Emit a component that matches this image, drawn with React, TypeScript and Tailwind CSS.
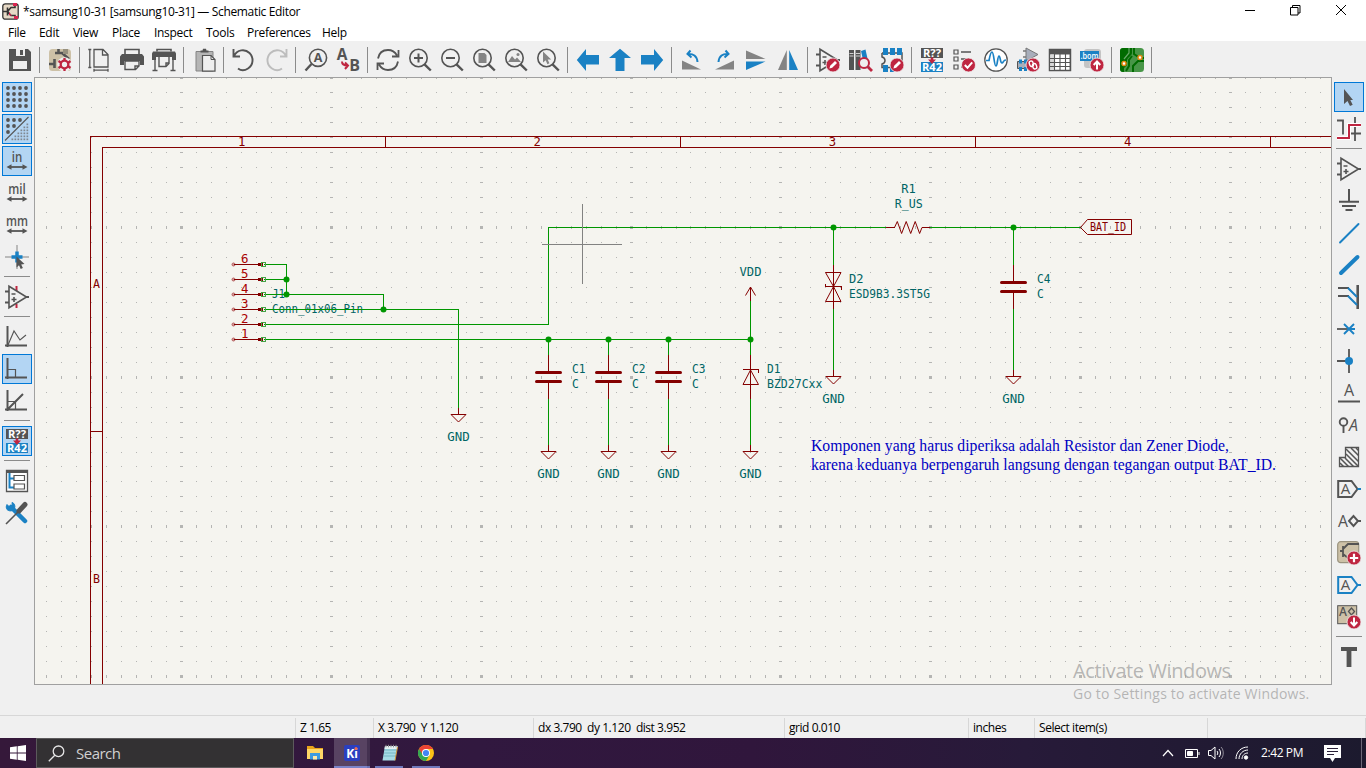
import React from "react";

const G = "#545454";
const B = "#1a81c4";
const R = "#bf2641";
const MAROON = "#840000";
const GREEN = "#009600";
const TEAL = "#006464";

type Kids = { children?: React.ReactNode };

function Ico({ children }: Kids) {
  return (
    <svg width="24" height="24" viewBox="0 0 24 24" fill="none" stroke={G} strokeWidth="1.6" className="block shrink-0 overflow-visible">
      {children}
    </svg>
  );
}

function IconText({ x, y, size, fill = G, weight = 700, italic = false, len, children }: { x: number; y: number; size: number; fill?: string; weight?: number; italic?: boolean; len?: number; children: string }) {
  return (
    <text x={x} y={y} fontSize={size} fill={fill} stroke="none" textAnchor="middle" fontWeight={weight} fontStyle={italic ? "italic" : "normal"} textLength={len} lengthAdjust="spacingAndGlyphs" fontFamily="'Open Sans','Noto Sans',sans-serif">
      {children}
    </text>
  );
}

function Badge({ x, y, r = 7, children }: { x: number; y: number; r?: number } & Kids) {
  return (
    <g transform={`translate(${x} ${y})`}>
      <circle r={r} fill={R} stroke="#efefef" strokeWidth="0.8" />
      {children}
    </g>
  );
}

const Pencil = () => <path d="M-3.6 3.6l.8-2.8L2-4l2 2L-.8 2.8z" fill="#fff" stroke="none" />;

const OpAmp = () => (
  <g>
    <path d="M4 1.2v21.6L21.5 12z" />
    <path d="M0 6.5h4M0 17.5h4M21 12h3" strokeWidth="2" />
    <path d="M6.5 9h4M6.5 14.5h5M9 12v5" />
  </g>
);

const Annotate = () => (
  <g stroke="none">
    <rect x="1" y="0" width="22" height="10" fill={G} />
    <rect x="1" y="14" width="22" height="10" fill={B} />
    <IconText x={12} y={8.8} size={10.5} fill="#fff" len={18}>R??</IconText>
    <IconText x={12} y={22.8} size={10.5} fill="#fff" len={20}>R42</IconText>
    <path d="M10.7 9.500h2.600v2h2.700L12 16 8 11.500h2.700z" fill={R} />
  </g>
);

function Mag({ children }: Kids) {
  return (
    <g>
      <circle cx="10.500" cy="10" r="8.700" />
      <path d="M16.500 16.300l6.300 6.200" strokeWidth="2.400" />
      {children}
    </g>
  );
}

const TOP: React.ReactNode[][] = [
  [
    <Ico><path d="M1 1h19l3 3v19H1z" fill={G} stroke="none" /><path d="M8 1h9v7H8zM5 13h14v8H5z" fill="#efefef" stroke="none" /><path d="M12 2h3v5h-3z" fill={G} stroke="none" /></Ico>,
  ],
  [
    <Ico>
      <rect x="1" y="1" width="22" height="22" rx="3.500" fill="#cdc1a7" stroke="none" />
      <path d="M10.500 1v4M15 5H7M1 16h5M6.500 11v9M14 5l7 6" strokeWidth="2.600" /><path d="M15 1h5v5h-5z" fill="#97917f" stroke="none" />
      <circle cx="16.500" cy="16.500" r="7.300" fill="#efefef" stroke="none" />
      <circle cx="16.500" cy="16.500" r="3.800" stroke={R} strokeWidth="2.300" />
      <path d="M16.500 10v3M16.500 20v3M10.500 13l3 2M20 18l2.500 2M10.500 20l3-2M20 15l2.500-2" stroke={R} strokeWidth="2.300" />
    </Ico>,
  ],
  [
    <Ico><path d="M6 1.500h9l5 5V19H6zM14.500 1.500v5.500H20M1.800 1v19M.3 1.500h3M.3 19.500h3M6 22.200h14M6 20.800v3M20 20.800v3" strokeWidth="1.300" /></Ico>,
    <Ico><path d="M5 6V1.500h14V6" /><path d="M0 8.500L2 6h20l2 2.500V17h-4v-4H4v4H0z" fill={G} stroke="none" /><path d="M5 13v8.500h10.500l3.500-3.500v-5zM15 21.500V18h4" strokeWidth="1.400" /></Ico>,
    <Ico><path d="M5 3.500V1.500h14v2" /><path d="M1 3.500h22l1 2V12h-4V9H4v3H0V5.500z" fill={G} stroke="none" /><path d="M7 9v9.500h7l3-3V9M14 18v-3h3M3 12v10M21 12v10M.5 22.500h5M18.500 22.500h5" strokeWidth="1.400" /></Ico>,
  ],
  [
    <Ico><g transform="translate(3 0)"><path d="M1 3.500h17V23H1z" fill="#b5b5b5" stroke="#848484" strokeWidth="1" /><path d="M5.500 4.500v-2h2L8 .8h3l.5 1.700h2v2z" fill={G} stroke="none" /><path d="M7.500 7.500H16l4 4v11.700H7.500z" fill="#efefef" strokeWidth="1.200" /><path d="M16 7.500v4h4" strokeWidth="1" /></g></Ico>,
  ],
  [
    <Ico><path d="M2.500 1v7.500H9M3 8C6 1.500 14 .5 18.500 5s4 12-1.500 15.500c-3 2-7 2.300-10 0" transform="translate(-1 0)" strokeWidth="1.900" /></Ico>,
    <Ico><path d="M22.500 1v7.500H16M22 8C19 1.500 11 .5 6.500 5S2.500 17 8 20.500c3 2 7 2.300 10 0" strokeWidth="1.900" stroke="#bdbdbd" /></Ico>,
  ],
  [
    <Ico><circle cx="14" cy="9.800" r="8.600" /><path d="M7.500 16L1.500 22.500" strokeWidth="2.400" /><IconText x={14} y={14.300} size={12.500}>A</IconText></Ico>,
    <Ico><IconText x={6} y={12} size={15.500}>A</IconText><IconText x={18.500} y={23} size={16}>B</IconText><path d="M6 13.500c0 3 2 4 5.500 4M9 14.500l3 3-3 3.500" stroke={R} strokeWidth="2" /></Ico>,
  ],
  [
    <Ico><path d="M2 10.500C3 5 7 2 12 2c4 0 7 2 9 5.500M22.500 2v6.500h-6.500M22 13.500C21 19 17 22 12 22c-4 0-7-2-9-5.500M1.500 22v-6.500H8" strokeWidth="1.800" /></Ico>,
    <Ico><Mag><path d="M6 10h9M10.500 5.500v9" strokeWidth="2" /></Mag></Ico>,
    <Ico><Mag><path d="M6 10h9" strokeWidth="2" /></Mag></Ico>,
    <Ico><Mag><path d="M6.500 5h6l2 2v8h-8z" fill="#848484" stroke="none" /></Mag></Ico>,
    <Ico><Mag><path d="M4 14l4-6 3 3.500 2-2 4 4.500z" fill="#848484" stroke="none" /><circle cx="14" cy="6.500" r="1.500" fill="#848484" stroke="none" /></Mag></Ico>,
    <Ico><Mag><path d="M7 3.500v11l2.700-2.300 1.700 4 2-.9-1.700-3.900h3.500z" fill="#848484" stroke="none" /></Mag></Ico>,
  ],
  [
    <Ico><path d="M.8 12L10 1v6h13v9.500H10V23z" fill={B} stroke="none" /></Ico>,
    <Ico><path d="M12 .8L23 10h-6.500v13h-9V10H1z" fill={B} stroke="none" /></Ico>,
    <Ico><path d="M23.200 12L14 1v6H1v9.500h13V23z" fill={B} stroke="none" /></Ico>,
  ],
  [
    <Ico><path d="M2 12.500v9h19z" fill="#848484" stroke="none" /><path d="M10.500 2.500L7.500 6l4 3.500M8 6c5-.5 9 2 9.500 8" stroke={B} strokeWidth="2" /></Ico>,
    <Ico><path d="M22 12.500v9H3z" fill="#848484" stroke="none" /><path d="M13.500 2.500l3 3.500-4 3.500M16 6c-5-.5-9 2-9.500 8" stroke={B} strokeWidth="2" /></Ico>,
    <Ico><path d="M2 2.500v8.500H21.500z" fill="#848484" stroke="none" /><path d="M2 22v-8.500H21.500z" fill={B} stroke="none" /></Ico>,
    <Ico><path d="M10.800 2v20H2z" fill="#848484" stroke="none" /><path d="M13.200 2v20H22z" fill={B} stroke="none" /></Ico>,
  ],
  [
    <Ico><OpAmp /><Badge x={17} y={17}><Pencil /></Badge></Ico>,
    <Ico><path d="M1 2h5v20H1zM7.500 2h5v20h-5z" fill={G} stroke="none" /><path d="M1.500 5.500h4M8 5.500h4M1.500 8h4M8 8h4" stroke="#efefef" strokeWidth=".8" /><path d="M13 3l4.500-1.500 4 18-4.500 1z" fill={B} stroke="none" /><circle cx="16" cy="15" r="5" fill="#efefef" stroke={R} strokeWidth="2" /><path d="M20 19l4 4" stroke={R} strokeWidth="2.800" /></Ico>,
    <Ico><path d="M2 5h20v14M2 5v4c4 1 4 6 0 7v3.500h12" strokeWidth="1.500" /><path d="M3 0h5v7H3zM10 0h5v7h-5zM17 0h5v7h-5zM3 17h5v7H3zM10 17h4v7h-4z" fill={B} stroke="none" /><Badge x={17} y={17}><Pencil /></Badge></Ico>,
  ],
  [
    <Ico><Annotate /></Ico>,
    <Ico><path d="M2 2h4v4H2zM2 9h4v4H2zM2 17h4v4H2z" strokeWidth="1.200" /><path d="M9 4h10M9 11h8M9 19h5" strokeWidth="1.400" /><Badge x={16.500} y={17}><path d="M-3.700 0l2.700 2.800L3.700-2.700" stroke="#fff" strokeWidth="2" /></Badge></Ico>,
    <Ico><circle cx="12" cy="12" r="11.200" fill="#fff" strokeWidth="1.300" /><path d="M2 12.500h3C6 7 7 4 8 4c2 0 2 14 4 14 1.500 0 1.500-10 3-10s1 7 3 7c1.500 0 1-3 4-3" stroke={B} strokeWidth="1.700" /></Ico>,
    <Ico><path d="M10 0v13l12-6.500z" fill="#a8aebb" stroke="#777" strokeWidth="1" /><path d="M10 3H7M10 9H7" stroke="#777" /><path d="M1.500 13.500h12v7h-12z" fill="#a8aebb" strokeWidth="1" /><path d="M3 11.500h3v4H3zM8 11.500h3v4H8zM3 19h3v4H3zM8 19h3v4H8z" fill={B} stroke="none" /><Badge x={17} y={17}><g transform="rotate(-20)" stroke="#fff" strokeWidth="1.400"><rect x="-3" y="-4.500" width="3.800" height="5.500" rx="1.900" /><rect x="-.8" y="-1" width="3.800" height="5.500" rx="1.900" /></g></Badge></Ico>,
    <Ico><path d="M1.600 1.500h20.800v21H1.600z" fill="#fff" /><path d="M1.500 1h21v5.500h-21z" fill={G} stroke="none" /><path d="M1.500 6.500h5v16h-5z" fill="#d9d9d9" stroke="none" /><path d="M1.500 10.500h21M1.500 14.500h21M1.500 18.500h21M6.500 6v16.500M12 6v16.500M17.500 6v16.500M1.500 1.500h21v21h-21z" strokeWidth="1.100" /></Ico>,
    <Ico><rect x="4" y="1" width="17" height="19" rx="3" fill="#c4c4c4" stroke="none" /><path d="M0 3h19v10H0z" fill={B} stroke="none" /><IconText x={9.500} y={10.700} size={9} fill="#fff" weight={600} len={18}>.bom</IconText><Badge x={17} y={17}><path d="M0 4.500v-8M-3.300 0L0-3.500 3.300 0" stroke="#fff" strokeWidth="2" /></Badge></Ico>,
  ],
  [
    <Ico><rect x="0" y="0" width="24" height="24" rx="3.500" fill="#489648" stroke="none" /><path d="M3 0h9v5c0 3-5 4-5 8v4l-3 3v4H3c-2 0-3-1-3-3V3c0-2 1-3 3-3z" fill="#006b00" stroke="none" /><path d="M14 0v6l6 4h4M12 8l-3 4v6l-3 5M13 24v-6l5-5h6" stroke="#006b00" strokeWidth="2" /><path d="M9 0v5l-5 6" stroke="#67a867" strokeWidth="1.200" /><circle cx="20" cy="9.500" r="2" fill="#fff" stroke="#e58b13" strokeWidth="1.500" /><circle cx="4" cy="15.500" r="2" fill="#fff" stroke="#e58b13" strokeWidth="1.500" /></Ico>,
  ],
];

const dots = (n: number, f: (i: number, j: number) => React.ReactNode) => {
  const out: React.ReactNode[] = [];
  for (let i = 0; i < n; i++) for (let j = 0; j < n; j++) out.push(<g key={`${i}-${j}`}>{f(i, j)}</g>);
  return out;
};

function UnitIcon({ label, len }: { label: string; len: number }) {
  return (
    <Ico>
      <IconText x={12} y={12.500} size={14} weight={600} len={len}>{label}</IconText>
      <path d="M4 18h16" strokeWidth="1.800" />
      <path d="M1.500 18l5-2.700v5.400zM22.500 18l-5-2.700v5.400z" fill={G} stroke="none" />
    </Ico>
  );
}

type Tool = { icon: React.ReactNode; on?: boolean };

const LEFT: Tool[][] = [
  [
    { on: true, icon: <Ico>{dots(4, (i, j) => <circle cx={3 + i * 6} cy={3 + j * 6} r="1.900" fill={G} stroke="none" />)}</Ico> },
    { on: true, icon: <Ico><path d="M0 23.500L23.500 0" strokeWidth="1.100" />{dots(3, (i, j) => (i + j < 3 ? <circle cx={3 + i * 6} cy={3 + j * 6} r="1.900" fill={G} stroke="none" /> : null))}{dots(6, (i, j) => (i + j > 4 ? <rect x={6.500 + i * 3} y={6.500 + j * 3} width="1.700" height="1.700" fill="#808890" stroke="none" /> : null))}</Ico> },
    { on: true, icon: <UnitIcon label="in" len={10.500} /> },
    { icon: <UnitIcon label="mil" len={17.500} /> },
    { icon: <UnitIcon label="mm" len={22} /> },
    { icon: <Ico><path d="M12 0v24M0 12h24" stroke="#848484" strokeWidth="1" /><path d="M12 6.500v11M6.500 12h11" stroke={B} strokeWidth="3.500" /><path d="M11.500 11.500v11l2.500-2.200 1.700 3.700 2.200-1-1.700-3.600 3.300-.3z" fill={G} stroke="none" /></Ico> },
  ],
  [{ icon: <Ico><path d="M11.500 1v5M11.500 19v4" stroke={R} strokeWidth="2" /><OpAmp /></Ico> }],
  [
    { icon: <Ico><path d="M2.500 1v21M0 20.500h22" strokeWidth="2" /><path d="M3 20L9 6l6 9 6-5" strokeWidth="1.100" /></Ico> },
    { on: true, icon: <Ico><path d="M2.500 1v21M0 20.500h22" strokeWidth="2" /><path d="M3 12.500h7.500v8" strokeWidth="1.200" /></Ico> },
    { icon: <Ico><path d="M2.500 1v21M0 20.500h22M3 20L18 5" strokeWidth="2" /><path d="M3 12.500h7.500v8" strokeWidth="1.200" /></Ico> },
  ],
  [{ on: true, icon: <Ico><Annotate /></Ico> }],
  [
    { icon: <Ico><path d="M1.500 1.500h21v21h-21z" fill="#fff" strokeWidth="1.300" /><path d="M1 1h22v3H1z" fill={G} stroke="none" /><path d="M4.500 4v14.500H9M4.500 9.500H9" stroke={B} strokeWidth="2" /><path d="M9 6.500h10.500v5H9zM9 15h10.500v5H9z" strokeWidth="1.200" /></Ico> },
    { icon: <Ico><path d="M6 6l14 14" stroke={B} strokeWidth="4.500" strokeLinecap="round" /><path d="M2 3.500L5 6.500 7.500 5 7 1.500C9.500 2 10.500 5 9.500 7.500 8 10.500 4 10.500 2 8.500 1 7 1 5 2 3.500z" fill={B} stroke={B} strokeWidth="1" /><path d="M1 23L13 11" strokeWidth="1.600" /><path d="M14 10l6-6.500" strokeWidth="5" strokeLinecap="round" /></Ico> },
  ],
];

const Flag = ({ c }: { c: string }) => <path d="M1.200 4h13.300l6 8-6 8H1.200z" stroke={c} strokeWidth="2" />;

const RIGHT: Tool[][] = [
  [
    { on: true, icon: <Ico><path d="M7 4v15l3.500-3 2.500 5 2.700-1.300-2.400-4.700H16z" fill={G} stroke="none" /></Ico> },
    { icon: <Ico><path d="M0 3.500h6v14M18 0v24M14 16.500h10" strokeWidth="1.800" /><path d="M0 21h12V8h12" stroke="#fff" strokeWidth="4" /><path d="M0 21h12V8h12" stroke={R} strokeWidth="2" /></Ico> },
  ],
  [
    { icon: <Ico><OpAmp /></Ico> },
    { icon: <Ico><path d="M12 0v13M2 12.800h20M5 17h14M8.500 21h7" strokeWidth="2" /></Ico> },
    { icon: <Ico><path d="M3 21.500L21.500 3" stroke={B} strokeWidth="1.900" strokeLinecap="round" /></Ico> },
    { icon: <Ico><path d="M4 20L20.500 4" stroke={B} strokeWidth="4" strokeLinecap="round" /></Ico> },
    { icon: <Ico><path d="M20.700 0v24" strokeWidth="2.600" /><path d="M1 3h11M1 11h11" strokeWidth="1.800" /><path d="M11 3l9 9M11 11l9 9" stroke={B} strokeWidth="2" /></Ico> },
    { icon: <Ico><path d="M0 12h12" strokeWidth="1.800" /><path d="M7 7l10 10M17 7L7 17M12 12h6" stroke={B} strokeWidth="1.900" /></Ico> },
    { icon: <Ico><path d="M12 0v24M0 12h12" strokeWidth="1.800" /><circle cx="12" cy="12" r="4" fill={B} stroke="none" /></Ico> },
    { icon: <Ico><IconText x={12} y={14.500} size={16} weight={500}>A</IconText><path d="M1 20.500h22" strokeWidth="2" /></Ico> },
    { icon: <Ico><circle cx="6.500" cy="9" r="3.800" strokeWidth="1.900" /><path d="M6.500 12.500V20" strokeWidth="1.900" /><IconText x={16.500} y={17.500} size={16} weight={500} italic>A</IconText></Ico> },
    { icon: <Ico><path d="M8.500 2.500h13v19h-19v-9h6z" strokeWidth="1.300" /><path d="M9 4l12.500 12.500M9 9l12.500 12.500M14 3l7.500 7.500M19 3l2.500 2.500M8 13l8.500 8.500M3 13l8.500 8.500M3 18l3.500 3.500" strokeWidth="1.500" /></Ico> },
    { icon: <Ico><Flag c={G} /><path d="M20.500 12H24" stroke={B} strokeWidth="2" /><IconText x={8.500} y={17.300} size={15} weight={400}>A</IconText></Ico> },
    { icon: <Ico><IconText x={6} y={17.500} size={16} weight={500} len={10}>A</IconText><path d="M12 12l4.500-5 4.500 5-4.500 5zM21 12h3" strokeWidth="1.900" /></Ico> },
    { icon: <Ico><rect x=".7" y=".7" width="21" height="21" rx="3" fill="#cdc1a7" stroke="#9a937f" strokeWidth="1.200" /><path d="M3 10h3M6 5v11M6 8l5-5h11M6 13l5 4" strokeWidth="1.800" /><Badge x={17} y={17}><path d="M0-4.200v8.400M-4.200 0h8.400" stroke="#fff" strokeWidth="2.200" /></Badge></Ico> },
    { icon: <Ico><Flag c={B} /><path d="M20.500 12H24" stroke={B} strokeWidth="2" /><IconText x={8.500} y={17.300} size={15} weight={400}>A</IconText></Ico> },
    { icon: <Ico><rect x=".7" y=".7" width="19" height="18" fill="#cdc1a7" stroke={G} strokeWidth="1" /><IconText x={6} y={11} size={12} weight={600}>A</IconText><path d="M11.500 6.500L14.500 3l3 3.500-3 3.500z" strokeWidth="1.300" /><Badge x={17} y={17}><path d="M0-4.500v8M-3.300 0L0 3.500 3.300 0" stroke="#fff" strokeWidth="2" /></Badge></Ico> },
  ],
  [{ icon: <Ico><path d="M4 2h16v4h-5.600v16H9.600V6H4z" fill={G} stroke="none" /></Ico> }],
];

function Rail({ groups }: { groups: Tool[][] }) {
  return (
    <div className="flex w-[34px] shrink-0 flex-col pl-px pt-1">
      {groups.map((g, i) => (
        <React.Fragment key={i}>
          {i > 0 && <div className="flex h-2 shrink-0 items-center px-[3px]"><div className="mb-px h-px w-[26px] bg-[#8b8b8b]" /></div>}
          {g.map((t, j) => (
            <div key={j} className="flex h-8 w-8 shrink-0 items-center justify-center">
              <div className={t.on ? "flex h-[30px] w-[30px] items-center justify-center border border-[#0078d7] bg-[#b3d5f3]" : "flex h-[30px] w-[30px] items-center justify-center"}>{t.icon}</div>
            </div>
          ))}
        </React.Fragment>
      ))}
    </div>
  );
}

function Grid() {
  const out: React.ReactNode[] = [];
  for (let i = -9; i <= 76; i++) {
    const x = Math.round(181 + i * 14.985);
    for (let j = -10; j <= 30; j++) {
      const y = Math.round(227 + j * 14.967);
      const mx = i % 10 === 0;
      const my = j % 10 === 0;
      out.push(<rect key={`${i},${j}`} x={mx ? x - 1 : x} y={my ? y - 1 : y} width={mx ? 3 : 1} height={my ? 3 : 1} />);
    }
  }
  return <g fill="#b5b5b3">{out}</g>;
}

function Label({ x, y, w, mid, fill = TEAL, children }: { x: number; y: number; w: number; mid?: boolean; fill?: string; children: string }) {
  return (
    <text x={mid ? x - w / 2 : x} y={y} textLength={w} lengthAdjust="spacingAndGlyphs" fontSize="11.5" fill={fill} fontFamily="'DejaVu Sans Mono',monospace">
      {children}
    </text>
  );
}

function Gnd({ x, y, gap = 26.5 }: { x: number; y: number; gap?: number }) {
  return (
    <g>
      <path d={`M${x} ${y - 7}v7`} stroke={MAROON} />
      <path d={`M${x - 7.5} ${y}h15l-7.5 7.500z`} stroke={MAROON} shapeRendering="auto" />
      <Label x={x} y={y + gap} w={22.500} mid>GND</Label>
    </g>
  );
}

function Cap({ x, y, name }: { x: number; y: number; name: string }) {
  return (
    <g>
      <path d={`M${x} ${y - 22}v18M${x} ${y + 5}v17`} stroke={MAROON} />
      <path d={`M${x - 12} ${y - 4.5}h24M${x - 12} ${y + 4.5}h24`} stroke={MAROON} strokeWidth="3" strokeLinecap="round" shapeRendering="auto" />
      <Label x={x + 23.500} y={y - 4} w={13.500}>{name}</Label>
      <Label x={x + 23.500} y={y + 11} w={6.800}>C</Label>
    </g>
  );
}

const JUNCTIONS = [[286.5, 279.5], [286.5, 294.5], [383.5, 309.5], [548.5, 339.5], [608.5, 339.5], [668.5, 339.5], [750.5, 339.5], [833.5, 227.5], [1013.5, 227.5]];

function Schematic() {
  return (
    <svg width="1296" height="606" viewBox="35 78 1296 606" className="block" fill="none" strokeWidth="1" shapeRendering="crispEdges">
      <Grid />
      <path d="M1332 136.500H90.500V690M1332 147.500H102.500V690M385.500 136v12M680.500 136v12M975.500 136v12M1270.500 136v12M90 431.500h12" stroke={MAROON} />
      {["1", "2", "3", "4"].map((n, i) => <Label key={n} x={241.800 + i * 295.300} y={146} w={7.400} mid fill={MAROON}>{n}</Label>)}
      <Label x={96.500} y={288} w={7} mid fill={MAROON}>A</Label>
      <Label x={96.500} y={583} w={7} mid fill={MAROON}>B</Label>

      <Label x={272} y={298} w={13}>J1</Label>
      <Label x={272} y={313} w={91}>Conn_01x06_Pin</Label>
      <path
        stroke={GREEN}
        d="M264 264.500H286.500V294.500M264 279.500H286.500M264 294.500H383.500V309.500M264 309.500H458.500V408M264 324.500H548.500V227.500H886M264 339.500H750.500M548.500 339V355M608.500 339V355M668.500 339V355M548.500 399V445M608.500 399V445M668.500 399V445M750.500 301V355M750.500 399V445M833.500 227V265M833.500 309V370M1013.500 227V265M1013.500 309V370M930 227.500H1081"
      />
      {[6, 5, 4, 3, 2, 1].map((n, i) => {
        const y = 264.5 + i * 15;
        return (
          <g key={n}>
            <circle cx="233.500" cy={y} r="1.500" fill="#d29a98" stroke="#b66060" shapeRendering="auto" />
            <path d={`M234 ${y}h25`} stroke={MAROON} />
            <rect x="258" y={y - 1.5} width="5" height="3" fill={MAROON} />
            <rect x="261.500" y={y - 2} width="4" height="4" stroke="#45a545" />
            <Label x={244.800} y={y - 1.5} w={7.500} mid fill="#a90000">{String(n)}</Label>
          </g>
        );
      })}

      <Gnd x={458.500} y={414.500} gap={26} />
      <Cap x={548.500} y={377} name="C1" />
      <Cap x={608.500} y={377} name="C2" />
      <Cap x={668.500} y={377} name="C3" />
      <Cap x={1013.500} y={287} name="C4" />
      <Gnd x={548.500} y={451.500} />
      <Gnd x={608.500} y={451.500} />
      <Gnd x={668.500} y={451.500} />
      <Gnd x={750.500} y={451.500} />
      <Gnd x={833.500} y={376.500} />
      <Gnd x={1013.500} y={376.500} />

      <Label x={750.500} y={276} w={22} mid>VDD</Label>
      <g stroke={MAROON}>
        <path d="M750.500 287V301M750.500 355V399M743 369.500H758.500V373M833.500 265V309M825.500 284V286.500H841.500V290M886 227.500h9M922 227.500h8" />
        <path d="M745.500 295.500L750.500 287l5 8.500M750.500 370l-7.500 14.500h15.500zM825.500 272.500h15.500l-7.500 14zM833.500 286.500l-8 15h15.500z" shapeRendering="auto" />
        <path d="M894.500 227.500L897.300 221.500 901.600 233.500 906.200 221.500 910.700 233.500 915.200 221.500 919.600 233.500 922 227.500" shapeRendering="auto" />
        <path d="M1080.500 227.500L1087.500 219.500H1131.500V234.500H1087.500z" shapeRendering="auto" />
      </g>
      <Label x={767} y={373} w={13.500}>D1</Label>
      <Label x={767} y={388} w={55.500}>BZD27Cxx</Label>
      <Label x={849} y={283} w={14.500}>D2</Label>
      <Label x={849} y={298} w={81}>ESD9B3.3ST5G</Label>
      <Label x={908.500} y={193} w={14.500} mid>R1</Label>
      <Label x={908.800} y={208} w={28} mid>R_US</Label>
      <Label x={1090} y={231} w={36} fill={MAROON}>BAT_ID</Label>

      {JUNCTIONS.map(([x, y]) => <circle key={`${x}-${y}`} cx={x} cy={y} r="3" fill={GREEN} shapeRendering="auto" />)}

      <g fill="#0000c2" fontSize="16.5" fontFamily="'Liberation Serif',serif">
        <text x="811" y="451" textLength="418" lengthAdjust="spacingAndGlyphs">Komponen yang harus diperiksa adalah Resistor dan Zener Diode,</text>
        <text x="811" y="470" textLength="465" lengthAdjust="spacingAndGlyphs">karena keduanya berpengaruh langsung dengan tegangan output BAT_ID.</text>
      </g>
      <path d="M582.500 204V284M542 244.500H622" stroke="#828281" />
    </svg>
  );
}

const MENU: [string, string][] = [
  ["File", "w-[31px]"], ["Edit", "w-[34px]"], ["View", "w-[39px]"], ["Place", "w-[42px]"],
  ["Inspect", "w-[52px]"], ["Tools", "w-[41px]"], ["Preferences", "w-[75px]"], ["Help", "w-[40px]"],
];

const STATUS: [string, string][] = [
  ["", "w-[296px]"], ["Z 1.65", "w-[78px]"], ["X 3.790  Y 1.120", "w-[160px]"], ["dx 3.790  dy 1.120  dist 3.952", "w-[251px]"],
  ["grid 0.010", "w-[184px]"], ["inches", "w-[66px]"], ["Select item(s)", "w-[173px]"], ["", "w-[158px]"],
];

function Taskbar() {
  return (
    <div className="flex h-[30px] bg-[linear-gradient(90deg,#35183a_0%,#31183f_35%,#30163c_55%,#271a39_75%,#1c1a2e_100%)] font-['Open_Sans',sans-serif] text-white">
      <div className="flex w-9 items-center justify-center">
        <svg width="16" height="16" viewBox="0 0 16 16" fill="#fff"><path d="M0 2.200L6.800 1.300V7.500H0zM7.600 1.200L16 0v7.500H7.600zM0 8.400h6.800v6.300L0 13.800zM7.600 8.400H16V16l-8.400-1.200z" /></svg>
      </div>
      <div className="flex w-[258px] items-center border border-[#5c5a5c] bg-[#333133] pl-[11px]">
        <svg width="17" height="17" viewBox="0 0 17 17" fill="none" stroke="#e5e5e5" strokeWidth="1.300"><circle cx="10.500" cy="6.300" r="5.300" /><path d="M6.800 10.200L.8 16.300" /></svg>
        <span className="ml-[11px] text-[15px] tracking-[-0.5px] text-[#d0d0d0]">Search</span>
      </div>
      <div className="flex w-10 items-center justify-center pl-[2px]">
        <svg width="16" height="16" viewBox="0 0 16 16"><path d="M0 1h6l2 2h8v11H0z" fill="#e8a41a" /><path d="M0 4h16v10H0z" fill="#ffd766" /><path d="M3 8h10v6.500H3z" fill="#3d9be0" /><path d="M6 11h4v3.500H6z" fill="#ffe9a8" /></svg>
      </div>
      <div className="flex w-[33px] flex-col border-b-2 border-[#7a83c8] bg-[#584362] pl-[2px] pt-[7px]">
        <svg width="16" height="16" viewBox="0 0 16 16" className="mx-auto block"><rect width="16" height="16" rx="2" fill="#2a3fc0" /><text x="8" y="12.500" fontSize="12" fontWeight="700" textAnchor="middle" fill="#fff" fontFamily="'Open Sans',sans-serif">Ki</text><circle cx="12" cy="3.500" r="1.500" fill="#ee6c4a" /></svg>
      </div>
      <div className="w-[3px] border-b-2 border-[#6a72b4] bg-[#443150]" />
      <div className="ml-[5px] flex w-7 flex-col border-b-2 border-[#6f78bb] pl-px pt-[6px]">
        <svg width="16" height="18" viewBox="0 0 16 18" className="mx-auto block"><path d="M3 2h12.500L13 16.500H.5z" fill="#a7dbe6" /><path d="M3 2h12.500l-.5 3H2.500z" fill="#e4f2f4" /><path d="M2.500 6h12M2 9h12M1.500 12h12" stroke="#69aebd" strokeWidth=".8" /><path d="M4 .8v2.500M6.500 .8v2.500M9 .8v2.500M11.500 .8v2.500M14 .8v2.500" stroke="#8f8f8f" /><path d="M15.500 3L13 16.500" stroke="#d39a3d" /></svg>
      </div>
      <div className="ml-[9px] flex w-7 flex-col border-b-2 border-[#6f78bb] pt-[7px]">
        <svg width="16" height="16" viewBox="0 0 16 16" className="mx-auto block"><circle cx="8" cy="8" r="8" fill="#fbc116" /><path d="M1.070 4A8 8 0 008 16l3.500-6L8 8z" fill="#34a853" /><path d="M8 4h6.930A8 8 0 008 0 8 8 0 001.070 4L4.500 9.500z" fill="#ea4335" /><circle cx="8" cy="8" r="4" fill="#fff" /><circle cx="8" cy="8" r="3.100" fill="#4285f4" /></svg>
      </div>
      <div className="flex-1" />
      <div className="flex items-center pr-1">
        <svg width="12" height="8" viewBox="0 0 12 8" fill="none" stroke="#fff" strokeWidth="1.200"><path d="M1 7l5-5.500L11 7" /></svg>
        <svg width="15" height="10" viewBox="0 0 15 10" className="ml-[11px]" fill="none" stroke="#fff"><path d="M.5 1.500h12v8H.5zM14 4v3" /><path d="M2.500 3.500h5v4h-5z" fill="#fff" /></svg>
        <svg width="17" height="14" viewBox="0 0 17 14" className="ml-2" fill="none" stroke="#fff"><path d="M.5 4.500h2.500l4-3.500v12L3 9.500H.5zM9 5c1 1 1 3 0 4M11 3c2 2 2 6 0 8" /><path d="M13 1c3 3 3 9 0 12" opacity=".5" /></svg>
        <svg width="14" height="14" viewBox="0 0 14 14" className="ml-[10px]" fill="none" stroke="#fff"><path d="M1 13C1 6 6 1 13 1M4 13c0-5 4-9 9-9M7 13c0-3.500 2.500-6 6-6" /><circle cx="11" cy="11.500" r="1.700" fill="#fff" /></svg>
        <span className="ml-[12px] w-[43px] whitespace-nowrap text-[12px] tracking-[-0.4px]">2:42 PM</span>
        <svg width="17" height="17" viewBox="0 0 17 17" className="ml-5"><path d="M0 0h17v13h-6l-2.500 4L6 13H0z" fill="#fff" /><path d="M3 3.500h11M3 6.500h11M3 9.500h7" stroke="#2a2038" strokeWidth="1.200" /></svg>
        <div className="ml-5 h-[30px] w-px bg-[#6b6878]" />
      </div>
    </div>
  );
}

export default function App() {
  return (
    <div className="relative flex h-[768px] w-[1366px] flex-col overflow-hidden bg-[#f0f0f0] font-['Open_Sans',sans-serif] text-[12px] text-black">
      <div className="flex h-6 shrink-0 items-center bg-white pl-[2px]">
        <svg width="17" height="17" viewBox="0 0 17 17" fill="none" stroke="#333" strokeWidth="1.300" className="mb-[2px]"><rect x=".8" y=".8" width="15.400" height="15.400" rx="2.500" fill="#e6d9c6" /><path d="M1 8.500h4M5.500 4.500v8M6 8l3-3.500h4V1M6 9l3 3.500h4V16" strokeWidth="1.600" /><path d="M11 0h4v3h-4zM12 13h4v3h-4zM7 9l3 4-3-1z" fill="#d92550" stroke="none" /></svg>
        <span className="ml-1 whitespace-nowrap tracking-[-0.34px]">*samsung10-31 [samsung10-31] — Schematic Editor</span>
        <div className="flex-1" />
        <svg width="120" height="14" viewBox="0 0 120 14" fill="none" stroke="#000" className="mb-1 mr-[10px]"><path d="M9 7.500h10M54.500 4.500h7.500v7.500h-7.500zM56.500 4.500v-2h7.500v7.500h-2" /><path d="M100 2l10 10M110 2l-10 10" /></svg>
      </div>
      <div className="flex h-[17px] shrink-0 items-center bg-white pl-2 tracking-[-0.3px]">
        {MENU.map(([m, w]) => <span key={m} className={`${w} whitespace-nowrap`}>{m}</span>)}
      </div>
      <div className="flex h-9 shrink-0 items-center pl-1 pt-[2px]">
        {TOP.map((g, i) => (
          <React.Fragment key={i}>
            {g.map((icon, j) => <div key={j} className="flex w-8 justify-center">{icon}</div>)}
            <div className="w-2 pl-[3px]"><div className="h-[26px] w-px bg-[#8b8b8b]" /></div>
          </React.Fragment>
        ))}
      </div>
      <div className="flex h-[608px] shrink-0">
        <Rail groups={LEFT} />
        <div className="h-[608px] w-[1298px] shrink-0 border border-[#a0a0a0] bg-[#f5f4ef]">
          <Schematic />
        </div>
        <Rail groups={RIGHT} />
      </div>
      <div className="h-[30px] shrink-0" />
      <div className="flex h-[23px] shrink-0 border-t border-[#d7d7d7] pt-[2px]">
        {STATUS.map(([s, w], i) => (
          <div key={i} className={`${w} flex h-5 shrink-0 items-center whitespace-pre border-r border-[#d7d7d7] pl-1 tracking-[-0.45px]`}>{s}</div>
        ))}
      </div>
      <Taskbar />
      <div className="absolute left-[1073px] top-[657px] whitespace-nowrap text-[#9a9a9a]/70">
        <div className="text-[20px] leading-7 tracking-[-0.4px]">Activate Windows</div>
        <div className="text-[14px] leading-[18px] tracking-[0.2px]">Go to Settings to activate Windows.</div>
      </div>
    </div>
  );
}
